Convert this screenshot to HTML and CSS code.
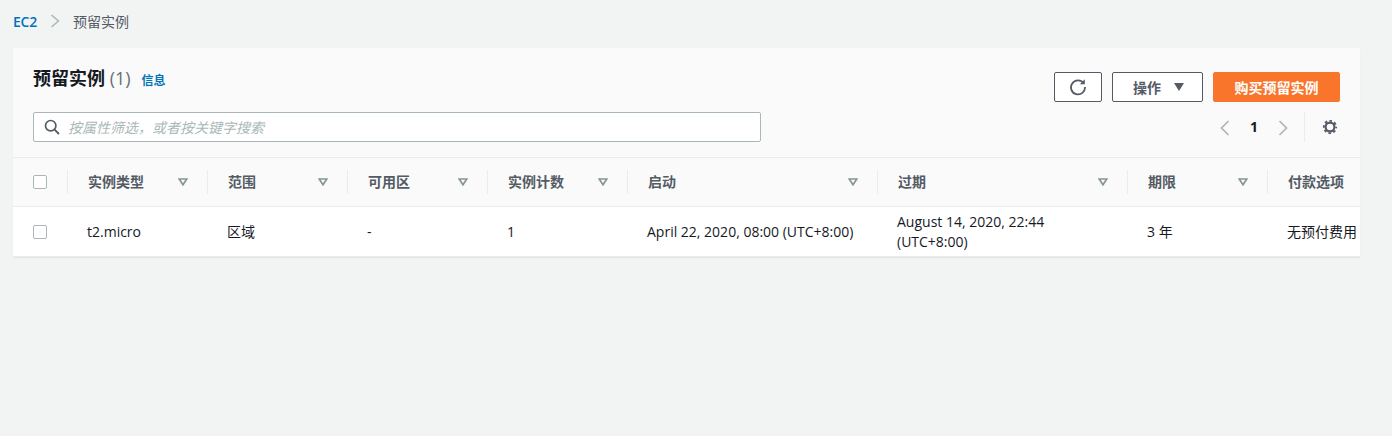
FILE: index.html
```html
<!DOCTYPE html>
<html lang="zh-CN">
<head>
<meta charset="utf-8">
<title>预留实例</title>
<link rel="stylesheet" href="styles.css">
</head>
<body>
<nav class="crumbs">
  <a class="crumb-link">EC2</a>
  <svg class="crumb-sep" width="10" height="14" viewBox="0 0 10 14"><path d="M1.5 1l7 6-7 6" fill="none" stroke="#aab7b8" stroke-width="1.5"/></svg>
  <span class="crumb-current">预留实例</span>
</nav>
<section class="panel">
  <header class="panel-head">
    <div class="head-left">
      <div class="title-row">
        <h1 class="title">预留实例 <span class="count">(1)</span></h1>
        <a class="info">信息</a>
      </div>
      <div class="search">
        <svg width="16" height="16" viewBox="0 0 16 16"><circle cx="6.7" cy="6.7" r="5.2" fill="none" stroke="#545b64" stroke-width="1.7"/><path d="M10.6 10.6l4.4 4.4" stroke="#545b64" stroke-width="1.9" fill="none"/></svg>
        <span class="placeholder">按属性筛选，或者按关键字搜索</span>
      </div>
    </div>
    <div class="head-right">
      <div class="actions">
        <button class="btn btn-icon"><svg width="18" height="18" viewBox="0 0 18 18"><path d="M14.6 5.2A7 7 0 1 0 16 9" fill="none" stroke="#545b64" stroke-width="1.8"/><path d="M15.8 1.2v5h-5z" fill="#545b64"/></svg></button>
        <button class="btn btn-menu">操作<svg width="10" height="8" viewBox="0 0 10 8"><path d="M0 0h10L5 8z" fill="#545b64"/></svg></button>
        <button class="btn btn-primary">购买预留实例</button>
      </div>
      <div class="pager">
        <svg class="pager-arrow" width="10" height="16" viewBox="0 0 10 16"><path d="M8.5 1L1.5 8l7 7" fill="none" stroke="#aab7b8" stroke-width="1.7"/></svg>
        <span class="page-num">1</span>
        <svg class="pager-arrow" width="10" height="16" viewBox="0 0 10 16"><path d="M1.5 1l7 7-7 7" fill="none" stroke="#aab7b8" stroke-width="1.7"/></svg>
        <span class="pager-div"></span>
        <svg class="gear" width="16" height="16" viewBox="0 0 16 16"><circle cx="8" cy="8" r="4.4" fill="none" stroke="#545b64" stroke-width="2.2"/><circle cx="8" cy="8" r="6.2" fill="none" stroke="#545b64" stroke-width="1.8" stroke-dasharray="2.6 2.27" stroke-dashoffset="1.3"/></svg>
      </div>
    </div>
  </header>
  <div class="table">
    <div class="row row-head">
      <div class="cell cell-check"><span class="check"></span></div>
      <div class="cell cell-w140 th"><span>实例类型</span><svg class="sort" width="10" height="8" viewBox="0 0 10 8"><path d="M1.2 1h7.6L5 6.8z" fill="none" stroke="#879596" stroke-width="1.7"/></svg></div>
      <div class="cell cell-w140 th"><span>范围</span><svg class="sort" width="10" height="8" viewBox="0 0 10 8"><path d="M1.2 1h7.6L5 6.8z" fill="none" stroke="#879596" stroke-width="1.7"/></svg></div>
      <div class="cell cell-w140 th"><span>可用区</span><svg class="sort" width="10" height="8" viewBox="0 0 10 8"><path d="M1.2 1h7.6L5 6.8z" fill="none" stroke="#879596" stroke-width="1.7"/></svg></div>
      <div class="cell cell-w140 th"><span>实例计数</span><svg class="sort" width="10" height="8" viewBox="0 0 10 8"><path d="M1.2 1h7.6L5 6.8z" fill="none" stroke="#879596" stroke-width="1.7"/></svg></div>
      <div class="cell cell-w250 th"><span>启动</span><svg class="sort" width="10" height="8" viewBox="0 0 10 8"><path d="M1.2 1h7.6L5 6.8z" fill="none" stroke="#879596" stroke-width="1.7"/></svg></div>
      <div class="cell cell-w250 th"><span>过期</span><svg class="sort" width="10" height="8" viewBox="0 0 10 8"><path d="M1.2 1h7.6L5 6.8z" fill="none" stroke="#879596" stroke-width="1.7"/></svg></div>
      <div class="cell cell-w140 th"><span>期限</span><svg class="sort" width="10" height="8" viewBox="0 0 10 8"><path d="M1.2 1h7.6L5 6.8z" fill="none" stroke="#879596" stroke-width="1.7"/></svg></div>
      <div class="cell cell-last th"><span>付款选项</span></div>
    </div>
    <div class="row row-body">
      <div class="cell cell-check"><span class="check"></span></div>
      <div class="cell cell-w140 td">t2.micro</div>
      <div class="cell cell-w140 td">区域</div>
      <div class="cell cell-w140 td">-</div>
      <div class="cell cell-w140 td">1</div>
      <div class="cell cell-w250 td">April 22, 2020, 08:00 (UTC+8:00)</div>
      <div class="cell cell-w250 td cell-wrap">August 14, 2020, 22:44 (UTC+8:00)</div>
      <div class="cell cell-w140 td">3 年</div>
      <div class="cell cell-last td">无预付费用</div>
    </div>
  </div>
</section>
</body>
</html>
```
FILE: styles.css
```css
* { box-sizing: border-box; }
html, body { height: 100%; }
body {
  margin: 0;
  padding: 0 32px 0 13px;
  background: #f2f3f3;
  color: #16191f;
  font-family: "Open Sans", "Noto Sans CJK SC", sans-serif;
  font-size: 14px;
  overflow: hidden;
}
.crumbs {
  height: 48px;
  padding-bottom: 6px;
  display: flex;
  align-items: center;
  font-size: 14px;
}
.crumb-link { color: #0073bb; font-weight: 600; letter-spacing: -.2px; }
.crumb-sep { margin: 0 13px; }
.crumb-current { color: #545b64; }
.panel { width: 1347px; background: #fff; box-shadow: 0 1px 1px rgba(0,28,36,.06); overflow: hidden; }
.panel-head {
  height: 110px;
  background: #fafafa;
  border-bottom: 1px solid #eaeded;
  display: flex;
  justify-content: space-between;
  padding: 0 20px;
}
.head-left { display: flex; flex-direction: column; }
.title-row { display: flex; align-items: baseline; gap: 11px; margin-top: 18px; height: 26px; }
.title { margin: 0; font-size: 18px; font-weight: 700; line-height: 24px; color: #16191f; }
.count { color: #687078; font-weight: 400; }
.info { color: #0073bb; font-size: 12px; font-weight: 700; }
.search {
  width: 728px;
  height: 30px;
  margin-top: 20px;
  background: #fff;
  border: 1px solid #aab7b8;
  border-radius: 2px;
  display: flex;
  align-items: center;
  padding-left: 10px;
  gap: 8px;
}
.placeholder { color: #aab7b8; font-style: italic; font-size: 14px; }
.head-right { display: flex; flex-direction: column; align-items: flex-end; }
.actions { display: flex; gap: 10px; margin-top: 24px; }
.btn {
  height: 30px;
  border: 1px solid #545b64;
  border-radius: 2px;
  background: #fff;
  color: #545b64;
  font: 700 14px "Open Sans", "Noto Sans CJK SC", sans-serif;
  display: flex;
  align-items: center;
  justify-content: center;
  padding: 0;
}
.btn-icon { width: 48px; }
.btn-menu { width: 91px; gap: 13px; justify-content: flex-start; padding-left: 20px; }
.btn-primary { width: 127px; background: #f8752b; border-color: #f8752b; color: #fff; }
.pager { display: flex; align-items: center; height: 30px; margin-top: 10px; }
.page-num { width: 48px; text-align: center; font-weight: 700; font-size: 14px; color: #16191f; margin-top: -1px; }
.pager-div { width: 1px; height: 30px; background: #eaeded; margin: 0 17px 0 16px; }
.gear { margin-right: 2px; margin-top: -1px; }
.pager-arrow { margin-top: 1px; }
.row { display: flex; }
.row-head { height: 49px; background: #fafafa; border-bottom: 1px solid #eaeded; }
.row-body { height: 50px; border-bottom: 1px solid #eaeded; }
.cell { padding: 0 20px; display: flex; align-items: center; position: relative; flex: none; }
.td { padding-left: 19px; padding-bottom: 1px; }
.cell-check { width: 55px; padding: 0 0 0 20px; }
.cell-w140 { width: 140px; }
.cell-w250 { width: 250px; }
.cell-last { width: 92px; padding-right: 0; white-space: nowrap; }
.cell-wrap { line-height: 20px; padding-bottom: 0; }
.th { font-weight: 700; color: #545b64; justify-content: space-between; padding-right: 20px; }
.th span { margin-top: -2px; }
.th::before {
  content: "";
  position: absolute;
  left: -1px;
  top: 12px;
  height: 24px;
  width: 1px;
  background: #eaeded;
}
.sort { flex: none; }
.check { width: 14px; height: 14px; border: 1px solid #aab7b8; border-radius: 2px; background: #fff; display: block; }
```
